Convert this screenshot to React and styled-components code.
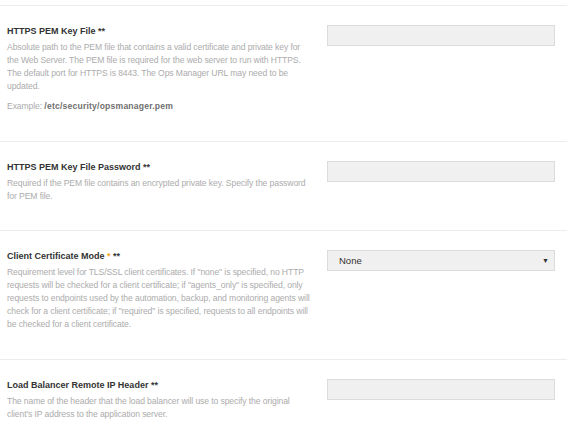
import styled, { createGlobalStyle } from "styled-components";

const Global = createGlobalStyle`
  body {
    margin: 0;
    background: #fff;
    font-family: "Liberation Sans", Arial, sans-serif;
  }
`;

const Page = styled.div`
  padding-top: 5px;
  width: 567px;
`;

const Row = styled.div`
  display: flex;
  border-top: 1px solid #ececec;
  padding: 19px 12px ${(p) => p.bottom || 28}px 7px;
`;

const Info = styled.div`
  width: 304px;
`;

const Title = styled.div`
  font-size: 9px;
  font-weight: 700;
  color: #333;
  line-height: 13px;
  margin-bottom: 3px;
  .req {
    color: #f5a623;
  }
`;

const Desc = styled.p`
  margin: 0;
  font-size: 8.6px;
  line-height: 13px;
  color: #acacac;
  letter-spacing: -0.1px;
`;

const Example = styled(Desc)`
  margin-top: 7px;
  b {
    color: #707070;
    letter-spacing: 0.2px;
  }
`;

const Field = styled.div`
  margin-left: 16px;
  width: 228px;
`;

const Input = styled.div`
  height: 19px;
  background: #f0f0f0;
  border: 1px solid #dcdcdc;
`;

const Select = styled(Input)`
  display: flex;
  align-items: center;
  justify-content: space-between;
  padding: 0 5px 0 11px;
  font-size: 9.5px;
  color: #333;
  .arrow {
    font-size: 7px;
  }
`;

export default function App() {
  return (
    <Page>
      <Global />
      <Row>
        <Info>
          <Title>HTTPS PEM Key File **</Title>
          <Desc>
            Absolute path to the PEM file that contains a valid certificate and private key for
            the Web Server. The PEM file is required for the web server to run with HTTPS.
            The default port for HTTPS is 8443. The Ops Manager URL may need to be updated.
          </Desc>
          <Example>
            Example: <b>/etc/security/opsmanager.pem</b>
          </Example>
        </Info>
        <Field>
          <Input />
        </Field>
      </Row>
      <Row bottom={27}>
        <Info>
          <Title>HTTPS PEM Key File Password **</Title>
          <Desc>
            Required if the PEM file contains an encrypted private key. Specify the password
            for PEM file.
          </Desc>
        </Info>
        <Field>
          <Input />
        </Field>
      </Row>
      <Row>
        <Info>
          <Title>
            Client Certificate Mode <span className="req">*</span> **
          </Title>
          <Desc>
            Requirement level for TLS/SSL client certificates. If "none" is specified, no HTTP
            requests will be checked for a client certificate; if "agents_only" is specified, only
            requests to endpoints used by the automation, backup, and monitoring agents will
            check for a client certificate; if "required" is specified, requests to all endpoints
            will be checked for a client certificate.
          </Desc>
        </Info>
        <Field>
          <Select>
            <span>None</span>
            <span className="arrow">▼</span>
          </Select>
        </Field>
      </Row>
      <Row>
        <Info>
          <Title>Load Balancer Remote IP Header **</Title>
          <Desc>
            The name of the header that the load balancer will use to specify the original
            client's IP address to the application server.
          </Desc>
        </Info>
        <Field>
          <Input />
        </Field>
      </Row>
    </Page>
  );
}
